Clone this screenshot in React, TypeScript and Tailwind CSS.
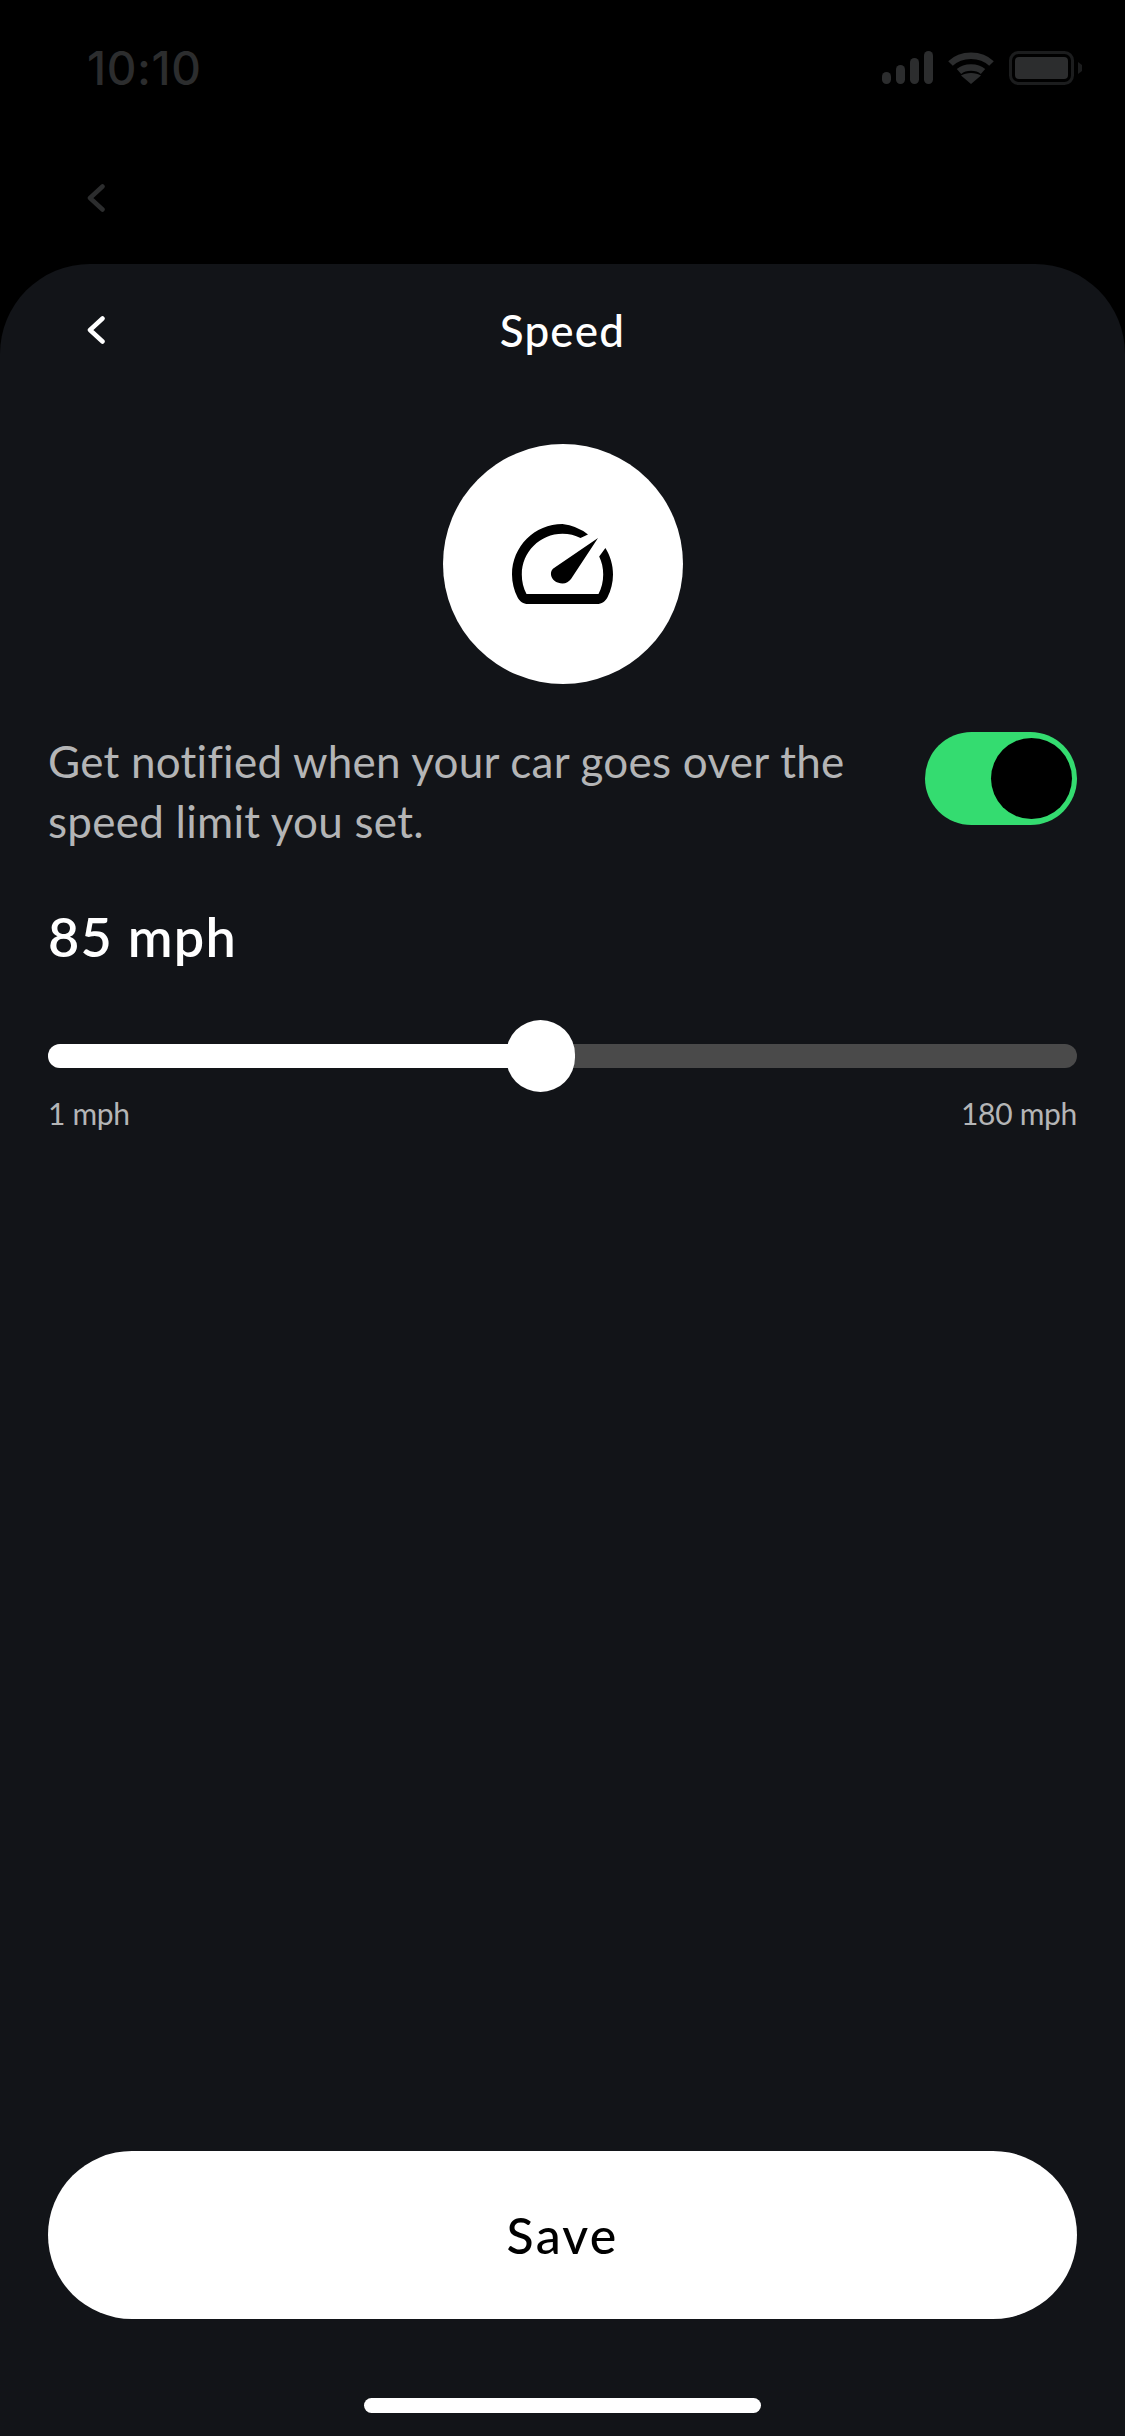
export default function App() {
  return (
    <div className="h-[2436px] w-[1125px] bg-black flex flex-col overflow-hidden font-['Lato',sans-serif]">
      {/* Status bar */}
      <div className="h-[132px] flex items-center justify-between pl-[87px] pr-[43px] pt-[3px] shrink-0">
        <span className="text-[46px] font-['Inter',sans-serif] font-medium leading-none tracking-[0.6px] text-[#2c2d2e]">10:10</span>
        <div className="flex items-center gap-[15px]">
          <svg width="51" height="33" viewBox="0 0 51 33" fill="#2c2d2e">
            <rect x="0" y="21" width="9" height="12" rx="4.5" />
            <rect x="14" y="14" width="9" height="19" rx="4.5" />
            <rect x="28" y="7" width="9" height="26" rx="4.5" />
            <rect x="42" y="0" width="9" height="33" rx="4.5" />
          </svg>
          <svg width="46" height="33" viewBox="0 0 46 33" fill="none" stroke="#2c2d2e" strokeWidth="6.5">
            <path d="M2.5 12.5C13 2 33 2 43.5 12.5" />
            <path d="M11 20.5C17 15 29 15 35 20.5" />
            <path d="M23 33L13 24.5C18 21 28 21 33 24.5Z" fill="#2c2d2e" stroke="none" />
          </svg>
          <svg width="73" height="34" viewBox="0 0 73 34" fill="none">
            <rect x="1.5" y="1.5" width="62" height="31" rx="8" stroke="#1c1d1e" strokeWidth="3" />
            <rect x="6" y="6" width="53" height="22" rx="4" fill="#2c2d2e" />
            <path d="M69 11L73 14V20L69 23Z" fill="#1c1d1e" />
          </svg>
        </div>
      </div>

      {/* Behind the sheet */}
      <div className="h-[132px] shrink-0 pl-[87px] pt-[52px]">
        <Chevron color="#2c2d2e" />
      </div>

      {/* Sheet */}
      <div className="flex-1 bg-[#121418] rounded-t-[90px] px-[48px] flex flex-col">
        <div className="relative h-[132px] flex items-center justify-center shrink-0">
          <div className="absolute left-[39px] top-[52px]">
            <Chevron color="#ffffff" />
          </div>
          <span className="text-[44px] font-medium tracking-[1.2px] text-white leading-none">Speed</span>
        </div>

        <div className="mt-[48px] self-center w-[240px] h-[240px] rounded-full bg-white flex items-center justify-center shrink-0">
          <svg width="101" height="80" viewBox="0 0 101 80">
            <path
              d="M76 10.5A50 50 0 0 0 50.5 0C22.6 0 0 22.6 0 50.5C0 58.6 2 66.5 5.5 73.2C7.6 77.4 11.3 80 16 80H85C89.7 80 93.4 77.4 95.5 73.2C99 66.5 101 58.6 101 50.5C101 40.8 98.2 31.8 93.4 24L87.2 32.5C89.8 37.8 91.2 44 91.2 50.5C91.2 57.5 89.6 64 86.5 70H14.5C11.4 64 9.8 57.5 9.8 50.5C9.8 28 28 9.8 50.5 9.8C57 9.8 63.2 11.3 68.5 14Z"
              fill="#000"
            />
            <path
              d="M86 14L42 44C36 48 39 59 50.5 59.5C54 59.5 57 57.5 59 55Z"
              fill="#000"
            />
          </svg>
        </div>

        <div className="mt-[47px] flex justify-between items-start">
          <p className="text-[44px] leading-[60px] font-normal tracking-[0.25px] text-[#b4b5b6] w-[840px]">
            Get notified when your car goes over the speed limit you set.
          </p>
          <div className="mt-[1px] w-[152px] h-[93px] rounded-full bg-[#34dc70] flex items-center justify-end pr-[5px] shrink-0">
            <div className="w-[81px] h-[81px] rounded-full bg-black" />
          </div>
        </div>

        <div className="mt-[53px] text-[54px] leading-[66px] font-semibold tracking-[1.2px] text-white">85 mph</div>

        <div className="relative mt-[74px] h-[24px] rounded-full bg-[#4a4a4a] shrink-0">
          <div className="h-full w-[490px] rounded-l-full bg-white" />
          <div className="absolute left-[458px] top-[-24px] w-[69px] h-[72px] rounded-full bg-white" />
        </div>

        <div className="mt-[27px] flex justify-between text-[30px] leading-[36px] tracking-[-0.3px] text-[#b4b5b6]">
          <span>1 mph</span>
          <span>180 mph</span>
        </div>

        <button className="mt-auto h-[168px] rounded-full bg-white text-black text-[50px] font-medium tracking-[2.2px] shrink-0">
          Save
        </button>

        <div className="mt-[79px] mb-[23px] self-center w-[397px] h-[15px] rounded-full bg-white shrink-0" />
      </div>
    </div>
  );
}

function Chevron({ color }: { color: string }) {
  return (
    <svg width="18" height="28" viewBox="0 0 18 28" fill="none" stroke={color} strokeWidth="4.5" strokeLinecap="round" strokeLinejoin="round" className="block">
      <path d="M15.5 2.5L3 14L15.5 25.5" />
    </svg>
  );
}
